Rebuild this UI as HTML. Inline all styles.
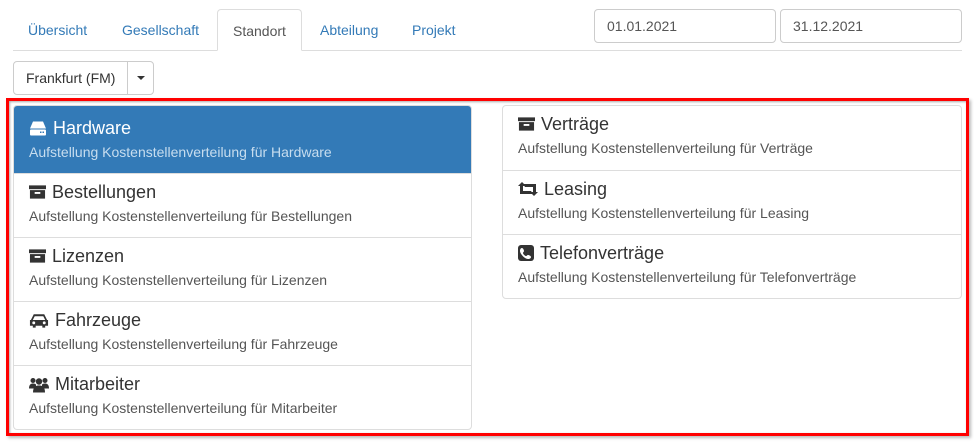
<!DOCTYPE html>
<html><head><meta charset="utf-8"><style>
*{box-sizing:border-box;margin:0;padding:0}
body{width:974px;height:443px;background:#fff;font-family:"Liberation Sans",sans-serif;color:#333;position:relative;overflow:hidden}
.abs{position:absolute}
.tabline{left:13px;top:50px;width:949px;height:1px;background:#ddd}
.tab{top:9px;height:42px;line-height:42px;font-size:14px;color:#337ab7;padding:0 15px;white-space:nowrap}
.tab.act{border:1px solid #ddd;border-bottom:1px solid #fff;border-radius:4px 4px 0 0;color:#555;background:#fff}
.inp{top:9px;height:34px;border:1px solid #ccc;border-radius:4px;font-size:14px;color:#555;padding:8px 12px;line-height:16px}
.btn{top:61px;height:34px;border:1px solid #ccc;border-radius:4px;font-size:14px;color:#333;white-space:nowrap}
.red{left:6px;top:98px;width:963px;height:338px;border:3px solid #f00;box-shadow:2px 2px 3px #bbb, inset 1px 1px 2px #aaa}
.list{border:1px solid #ddd;border-radius:4px;background:#fff;overflow:hidden}
.item{height:64px;border-top:1px solid #ddd;padding:7px 0 0 15px}
.item:first-child{border-top:none}
.item h4{font-size:18px;font-weight:normal;line-height:22px;color:#333;display:flex;align-items:center}
.item h4 svg{margin-right:6px;fill:#333}
.item p{font-size:14px;line-height:20px;color:#555;margin-top:3px}
.item.act{background:#337ab7}
.item.act h4{color:#fff}.item.act h4 svg{fill:#fff}
.item.act p{color:#c7ddef}
</style></head><body>
<div class="abs tabline"></div>
<div class="abs tab" style="left:13px">Übersicht</div>
<div class="abs tab" style="left:107px">Gesellschaft</div>
<div class="abs tab act" style="left:217px;width:85px">Standort</div>
<div class="abs tab" style="left:305px">Abteilung</div>
<div class="abs tab" style="left:397px">Projekt</div>
<div class="abs inp" style="left:594px;width:182px">01.01.2021</div>
<div class="abs inp" style="left:780px;width:182px">31.12.2021</div>
<div class="abs btn" style="left:13px;width:115px;border-radius:4px 0 0 4px;padding:8px 12px;line-height:16px">Frankfurt (FM)</div>
<div class="abs btn" style="left:127px;width:27px;border-radius:0 4px 4px 0"><div class="abs" style="left:9px;top:14px;width:0;height:0;border-left:4px solid transparent;border-right:4px solid transparent;border-top:4px solid #333"></div></div>
<div class="abs red"></div>

<div class="abs list" style="left:13px;top:105px;width:459px">
 <div class="item act" style="height:67px;padding-top:11px"><h4><svg width="18" height="17" viewBox="0 0 18 16"><path d="M4 1h10l3 7H1z"/><rect x="1" y="9" width="16" height="6" rx="1"/><rect x="11" y="11" width="1.5" height="1.5" fill="#337ab7"/><rect x="13.5" y="11" width="1.5" height="1.5" fill="#337ab7"/></svg>Hardware</h4><p>Aufstellung Kostenstellenverteilung für Hardware</p></div>
 <div class="item"><h4><svg width="17" height="16" viewBox="0 0 18 16"><rect x="0" y="1" width="18" height="4"/><path d="M1 6h16v9H1z"/><rect x="6" y="8" width="6" height="2" fill="#fff"/></svg>Bestellungen</h4><p>Aufstellung Kostenstellenverteilung für Bestellungen</p></div>
 <div class="item"><h4><svg width="17" height="16" viewBox="0 0 18 16"><rect x="0" y="1" width="18" height="4"/><path d="M1 6h16v9H1z"/><rect x="6" y="8" width="6" height="2" fill="#fff"/></svg>Lizenzen</h4><p>Aufstellung Kostenstellenverteilung für Lizenzen</p></div>
 <div class="item"><h4><svg width="20" height="16" viewBox="0 0 21 16"><path d="M5 2h11l3 6h1v6h-3v2h-3v-2H7v2H4v-2H1V8h1z"/><path d="M6 4h9l2 4H4z" fill="#fff"/><circle cx="5" cy="11" r="1.5" fill="#fff"/><circle cx="16" cy="11" r="1.5" fill="#fff"/></svg>Fahrzeuge</h4><p>Aufstellung Kostenstellenverteilung für Fahrzeuge</p></div>
 <div class="item"><h4><svg width="20" height="17" viewBox="0 0 20 16"><circle cx="4" cy="4" r="2.5"/><circle cx="16" cy="4" r="2.5"/><circle cx="10" cy="5" r="3.2"/><path d="M0 12c0-4 2-5 4-5s3 1 3 1v4z"/><path d="M20 12c0-4-2-5-4-5s-3 1-3 1v4z"/><path d="M4 16c0-6 3-7 6-7s6 1 6 7z"/></svg>Mitarbeiter</h4><p>Aufstellung Kostenstellenverteilung für Mitarbeiter</p></div>
</div>

<div class="abs list" style="left:502px;top:105px;width:460px">
 <div class="item"><h4><svg width="17" height="16" viewBox="0 0 18 16"><rect x="0" y="1" width="18" height="4"/><path d="M1 6h16v9H1z"/><rect x="6" y="8" width="6" height="2" fill="#fff"/></svg>Verträge</h4><p>Aufstellung Kostenstellenverteilung für Verträge</p></div>
 <div class="item"><h4><svg width="20" height="16" viewBox="0 0 20 16"><path d="M4 1l4 4H5v5h8l2 3H2V5H0z"/><path d="M16 15l-4-4h3V6H7L5 3h13v8h2z"/></svg>Leasing</h4><p>Aufstellung Kostenstellenverteilung für Leasing</p></div>
 <div class="item"><h4><svg width="16" height="16" viewBox="0 0 16 16"><rect x="0" y="0" width="16" height="16" rx="3"/><path d="M4 3c1 0 2 2 2 3s-1 1-1 2 2 3 3 3 1-1 2-1 3 1 3 2-1 2-3 2C7 14 2 9 2 6c0-2 1-3 2-3z" fill="#fff"/></svg>Telefonverträge</h4><p>Aufstellung Kostenstellenverteilung für Telefonverträge</p></div>
</div>
</body></html>
